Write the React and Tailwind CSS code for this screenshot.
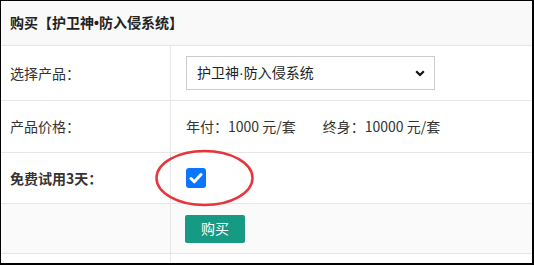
import React from 'react';

const font = { fontFamily: '"Noto Sans CJK SC", "Noto Sans", sans-serif' };

// narrow latin dot, like the reference's YaHei rendering
const Dot = ({ ch }) => <span className="font-['Liberation_Sans',sans-serif]">{ch}</span>;

const Row = ({ label, bold, className = '', children, h }) => (
  <div className={`grid grid-cols-[170px_1fr] border-b border-[#e6e6e6] ${h} ${className}`}>
    <div className={`flex items-center border-r border-[#e6e6e6] pl-[9px] text-[14px] text-[#333] ${bold ? 'font-bold' : ''}`}>
      {label}
    </div>
    <div className="flex items-center pl-[15px] text-[14px] text-[#333]">{children}</div>
  </div>
);

export default function App() {
  return (
    <div
      className="relative w-[534px] h-[265px] overflow-hidden border-t border-l border-r-2 border-b-2 border-black bg-white"
      style={font}
    >
      {/* header */}
      <div className="flex h-[45px] items-center border-b border-[#e6e6e6] bg-[#f9f9f9] pb-[1px] pl-[9px] text-[14px] font-bold text-[#222]">
        <span>
          购买【护卫神<Dot ch="•" />防入侵系统】
        </span>
      </div>

      <Row label="选择产品：" h="h-[55px]">
        <div className="flex h-[34px] w-[249px] items-center justify-between border border-[#ccc] bg-white pl-[10px] pr-[9px] text-[#222]">
          <span>
            护卫神<Dot ch="·" />防入侵系统
          </span>
          <svg width="10" height="7" viewBox="0 0 10 7">
            <path d="M1.2 1.2 L5 5 L8.8 1.2" fill="none" stroke="#111" strokeWidth="2.2" />
          </svg>
        </div>
      </Row>

      <Row label="产品价格：" h="h-[52px]">
        <span>年付：1000 元/套</span>
        <span className="ml-[27px]">终身：10000 元/套</span>
      </Row>

      <Row label="免费试用3天：" bold h="h-[51px]">
        <div className="flex h-[20px] w-[20px] items-center justify-center rounded-[3px] bg-[#0a75ff]">
          <svg width="14" height="12" viewBox="0 0 14 12">
            <path d="M2 6.5 L5.3 9.8 L12 2.5" fill="none" stroke="#fff" strokeWidth="3" strokeLinecap="round" strokeLinejoin="round" />
          </svg>
        </div>
      </Row>

      <Row label="" h="h-[50px]" className="bg-[#fafafa]">
        <button className="ml-[-1px] flex h-[28px] w-[60px] items-center justify-center rounded-[2px] bg-[#179a83] text-[14px] text-white">
          购买
        </button>
      </Row>

      <div className="grid h-[20px] grid-cols-[170px_1fr]">
        <div className="border-r border-[#e6e6e6]" />
        <div />
      </div>

      {/* red annotation ellipse */}
      <svg className="pointer-events-none absolute left-[153px] top-[148px]" width="102" height="59" viewBox="0 0 102 59">
        <ellipse cx="50.5" cy="29" rx="48" ry="27" fill="none" stroke="#e8353b" strokeWidth="2.5" />
      </svg>
    </div>
  );
}
